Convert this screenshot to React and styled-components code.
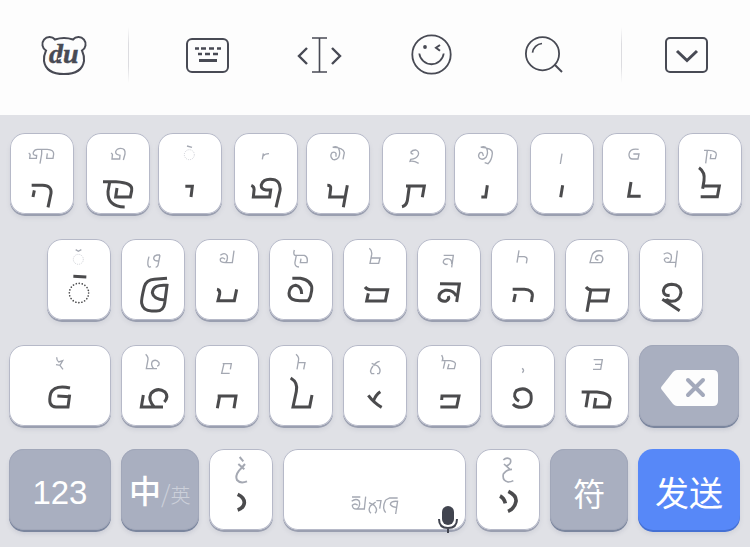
import React from "react";
import styled, { createGlobalStyle, css } from "styled-components";

const GlobalStyle = createGlobalStyle`
  * { box-sizing: border-box; }
  body {
    margin: 0;
    background: #e0e1e6;
    font-family: "Liberation Sans", "Noto Sans CJK SC", sans-serif;
  }
`;

const Keyboard = styled.main`
  min-height: 100vh;
  background: #e0e1e6;
`;

const Toolbar = styled.header`
  display: grid;
  grid-template-columns: 128fr 1px 492fr 1px 128fr;
  align-items: center;
  justify-items: center;
  height: 115px;
  padding-bottom: 5px;
  background: #fdfdfd;
`;

const ToolGroup = styled.div`
  display: flex;
  justify-content: space-around;
  justify-self: stretch;
  padding: 0 22px;
`;

const Divider = styled.span`
  width: 1px;
  height: 56px;
  background: linear-gradient(#fdfdfd, #dcdce0 30%, #dcdce0 70%, #fdfdfd);
`;

const ToolButton = styled.button`
  display: flex;
  padding: 0;
  border: 0;
  background: none;
  color: #484a54;
`;

const ToolIcon = styled.svg`
  display: block;
  width: 48px;
  height: 48px;
  fill: none;
  stroke: currentColor;
  stroke-width: 2;
`;

const LogoText = styled.text`
  font: italic bold 28px "Liberation Serif", serif;
  fill: currentColor;
  stroke: currentColor;
  stroke-width: 0.5;
`;

const Rows = styled.div`
  display: flex;
  flex-direction: column;
  gap: 25px;
  padding: 18px 0 16px;
`;

const LowerRows = styled.div`
  display: flex;
  flex-direction: column;
  gap: 23px;
`;

const Row = styled.div`
  display: flex;
  gap: ${(p) => p.$gap || 10}px;
  padding: 0 ${(p) => p.$right}px 0 ${(p) => p.$left}px;
`;

const Pair = styled.div`
  display: flex;
  flex: 2 1 8px;
  min-width: 0;
  gap: 8px;
`;

const tones = {
  light: css`
    background: #ffffff;
    box-shadow: inset 0 0 0 1px #b6b9c8, 0 2px 0 #9a9fb0,
      0 4px 4px rgba(120, 125, 150, 0.15);
  `,
  gray: css`
    background: #a9afc0;
    box-shadow: inset 0 0 0 1px #a1a7b9, 0 2px 0 #7b869e,
      0 4px 4px rgba(120, 125, 150, 0.2);
  `,
  blue: css`
    background: #5788f8;
    box-shadow: 0 2px 0 #4470d4, 0 4px 4px rgba(120, 125, 150, 0.15);
  `,
};

const Key = styled.button`
  position: relative;
  display: flex;
  align-items: center;
  justify-content: center;
  flex: ${(p) => p.$grow || 1} 1 0;
  min-width: 0;
  height: 81px;
  padding: 0;
  border: 0;
  border-radius: 15px;
  color: #ffffff;
  ${(p) => tones[p.$tone || "light"]}
`;

const Glyphs = styled.svg`
  display: block;
  flex: none;
  width: 64px;
  height: 80px;
  fill: none;
`;

const Minor = styled.path`
  stroke: #a4a8b2;
  stroke-width: ${(p) => p.$weight || 4};
`;

const Major = styled.path`
  stroke: #4b4b4d;
  stroke-width: ${(p) => p.$weight || 9};
`;

const MinorRing = styled.circle`
  stroke: #b9bcc4;
  stroke-width: 2;
  stroke-dasharray: 3 3;
`;

const MajorRing = styled.circle`
  stroke: #4b4b4d;
  stroke-width: 5;
  stroke-linecap: round;
  stroke-dasharray: 0.1 9;
`;

const Label = styled.span`
  padding-top: 6px;
  font-size: ${(p) => p.$size}px;
  line-height: 40px;
  white-space: nowrap;
`;

const HanLabel = styled(Label)`
  padding-top: 4px;
  font-family: "Noto Sans CJK SC", sans-serif;
`;

const Chosen = styled.span`
  font-weight: 500;
`;

const Alternate = styled.span`
  font-size: 20px;
  font-weight: 300;
  color: #ccd0da;
`;

const Slash = styled(Alternate)`
  font-size: 24px;
`;

const EraseIcon = styled.svg`
  width: 58px;
  height: 36px;
  margin-top: 4px;
`;

const Mic = styled.svg`
  position: absolute;
  right: 8px;
  bottom: -3px;
  width: 20px;
  height: 28px;
  fill: none;
  stroke: #41444f;
  stroke-width: 2;
`;

const rowOne = [
  {
    name: "1",
    minor: "M56 57 Q62 60 60 66 L59 73 H79 L80 64 H76 Q68 63 70 55 Q74 45 84 46 H112 Q132 47 131 60 L129 73 H110 L112 58 M95 46 V60 L90 89",
    major: "M65 154 H98 Q126 155 123 178 L114 220 M73 169 L69 189",
  },
  {
    name: "2",
    minor: "M75 57 Q81 60 79 65 L78 75 H101 L102 64 Q88 62 89 53 Q92 43 104 43 Q119 43 117 60 L112 78",
    major: "M51 143 H90 Q142 146 137 170 L133 189 H89 L93 162 M71 145 L66 172 Q64 218 116 219",
  },
  {
    name: "3",
    ring: [94, 62],
    minor: "M87 36 L102 40",
    major: "M82 157 H103 L99 189",
  },
  {
    name: "4",
    minor: "M88 58 L85 76 M87 66 Q92 59 105 59",
    major: "M52 154 Q62 158 60 170 L58 189 H107 L110 168 H96 Q80 166 82 152 Q88 136 108 136 Q142 136 138 170 L126 220",
  },
  {
    name: "5",
    minor: "M80 40 Q92 34 98 44 Q104 56 98 70 Q90 80 80 76 Q70 66 78 56 Q86 52 90 58 V68 M80 40 Q112 40 115 56 L111 76",
    major: "M64 154 Q76 154 74 164 L71 189 H114 M124 154 L112 220",
  },
  {
    name: "6",
    minor: "M94 60 Q86 60 87 54 Q92 47 102 48 Q112 52 109 62 Q104 74 86 76 L84 82 Q96 80 110 88",
    major: "M72 156 H127 L121 190 M82 156 L76 200 Q73 215 60 218",
  },
  {
    name: "7",
    minor: "M80 40 Q92 34 98 44 Q104 56 96 70 Q86 80 77 73 Q70 64 78 56 Q86 52 88 66 M82 40 Q116 42 115 58 Q113 80 102 89 L92 86",
    major: "M100 154 L95 189 H82",
  },
  { name: "8", minor: "M96 59 L91 90", major: "M98 154 L92 190" },
  {
    name: "9",
    minor: "M110 46 Q84 42 81 60 Q80 75 92 75 H108 L111 60 H94",
    major: "M87 144 L80 187 H116",
  },
  {
    name: "10",
    minor: "M78 49 H92 Q116 50 115 62 L112 74 H97 L99 60 M88 49 L83 88",
    major: "M63 101 Q82 114 78 140 L74 164 M74 156 H124 L118 188 H68",
  },
];

const rowTwo = [
  {
    name: "11",
    ring: [94, 58],
    bigRing: true,
    minor: "M86 29 L94 34 L103 29",
    major: "M79 109 L118 111",
  },
  {
    name: "12",
    minor: "M84 50 Q78 70 82 78 Q84 83 90 80 M117 45 H108 Q98 47 98 56 Q100 64 114 63 M117 45 L111 76 Q108 82 104 81",
    major: "M138 115 L100 118 Q76 120 70 140 Q60 180 62 190 Q66 213 92 213 H106 Q128 213 131 190 L138 136 Q96 132 94 158 Q97 178 132 180",
  },
  {
    name: "13",
    minor: "M76 46 Q88 36 96 46 Q100 58 92 68 H112 L117 32 M92 68 Q74 68 76 57 Q82 50 90 58",
    major: "M66 148 Q76 150 74 162 L69 182 H118 L125 148",
  },
  {
    name: "14",
    minor: "M76 30 Q72 44 78 46 H106 Q118 50 114 68 H94 L96 56 M82 46 L78 66 Q76 80 90 81",
    major: "M70 115 H94 Q132 122 128 152 Q126 170 118 182 H98 Q60 184 60 160 Q62 138 80 136 Q98 140 98 162",
  },
  {
    name: "15",
    minor: "M79 25 Q88 32 86 44 L81 70 H107 L111 54 H85",
    major: "M66 141 Q72 149 82 149 H134 L127 183 H71 L76 160",
  },
  {
    name: "16",
    minor: "M80 46 H109 L104 82 M104 72 Q106 56 90 56 Q78 58 79 68 Q84 76 92 72",
    major: "M69 131 L127 132 L119 186 M118 168 Q108 148 84 151 Q64 158 66 174 Q72 186 88 183 Q98 178 94 168",
  },
  {
    name: "17",
    minor: "M84 31 L78 68 M80 50 H100 Q109 52 108 58 L106 70",
    major: "M65 148 H100 Q126 150 124 168 L121 186 M73 162 L68 186",
  },
  {
    name: "18",
    minor: "M112 33 Q84 29 80 50 L75 68 H108 Q118 58 110 48 Q98 42 92 52 Q90 60 100 60",
    major: "M63 141 Q70 150 80 150 H130 L124 183 H73 M77 152 L66 215",
  },
  {
    name: "19",
    minor: "M74 43 Q86 34 96 44 Q100 58 92 66 Q76 70 76 58 Q82 50 90 56 M84 67 H111 M115 32 L109 82",
    major: "M92 166 Q74 168 73 152 Q76 134 98 133 Q126 134 126 158 Q122 184 98 184 Q84 182 82 176 M70 178 L122 212",
  },
];

const rowThreeFirst = {
  name: "20",
  minor: "M86 34 Q86 44 92 48 L104 44 L96 58 L84 56 M94 56 L105 70",
  major: "M126 126 Q80 116 68 142 Q58 182 84 183 H120 L125 146 M88 150 L125 152",
};

const rowThree = [
  {
    name: "21",
    minor: "M74 25 Q84 34 80 46 L76 68 H108 M98 68 Q88 56 94 46 Q106 38 114 50 Q116 60 108 60",
    major: "M67 147 L61 183 H126 M100 183 Q80 162 90 142 Q110 122 132 138 Q144 152 130 168",
  },
  {
    name: "22",
    minor: "M83 53 H109 L106 70 M87 53 L80 82 H104",
    major: "M68 150 H123 L117 187 M74 150 L67 187",
  },
  {
    name: "23",
    minor: "M81 25 Q92 34 88 46 L84 70 M86 50 H108 L104 70",
    major: "M65 96 Q88 110 82 136 L72 183 H122 L129 147",
  },
  {
    name: "24",
    minor: "M90 60 Q78 76 86 83 H94 M110 46 Q98 48 92 60 M86 52 L104 60 Q116 72 108 83 H102",
    major: "M76 148 Q92 170 116 184 M112 137 Q98 146 92 164",
  },
  {
    name: "25",
    minor: "M74 27 Q80 38 76 44 H100 Q118 48 115 56 L112 68 H92 L96 54 M84 46 L79 68",
    major: "M74 162 L75 150 H126 L119 183 H70",
  },
  {
    name: "26",
    minor: "M93 67 Q102 72 94 80",
    major: "M84 166 Q62 152 76 134 Q102 120 119 142 Q128 182 92 184 Q74 184 66 174",
  },
  {
    name: "27",
    minor: "M86 41 H112 L107 70 H84 M90 55 H110",
    major: "M50 138 H96 Q138 142 135 162 L131 183 H88 L92 156 M70 140 L63 184",
  },
];

const toneMark = {
  name: "28",
  minorWeight: 6,
  majorWeight: 11,
  minor: "M92 21 L103 34 M88 42 L106 58 M108 42 Q98 54 90 62 Q78 78 84 90 Q94 102 114 94",
  major: "M86 133 Q106 142 106 158 Q104 174 86 180",
};

const doubleToneMark = {
  name: "29",
  minorWeight: 5,
  majorWeight: 11,
  minor: "M82 30 Q92 20 103 28 Q108 42 90 48 M84 42 L104 60 M108 58 Q92 58 82 72 Q78 92 96 96 Q106 96 112 92",
  major: "M97 124 Q122 136 120 154 Q116 176 96 184 M72 138 Q84 144 88 160",
};

const spaceGlyphs = {
  name: "space",
  minor:
    "M27 141 H52 M26 154 Q38 144 48 152 Q54 168 42 177 Q28 178 28 166 Q36 158 44 166 M42 177 H64 L68 140 M84 190 Q74 182 82 168 L98 156 M78 158 L94 166 Q106 180 96 190 M100 152 H114 L110 176 M128 150 Q116 174 128 188 M164 144 H140 L128 150 M164 154 Q142 152 142 164 Q148 172 160 172 M164 152 L158 192",
};

function Drawing({ glyph }) {
  return (
    <Glyphs viewBox="0 0 192 240" aria-hidden="true">
      {glyph.ring && <MinorRing cx={glyph.ring[0]} cy={glyph.ring[1]} r="15" />}
      {glyph.bigRing && <MajorRing cx="96" cy="159" r="29" />}
      <Minor d={glyph.minor} $weight={glyph.minorWeight} />
      {glyph.major && <Major d={glyph.major} $weight={glyph.majorWeight} />}
    </Glyphs>
  );
}

function LetterKey({ glyph, grow }) {
  return (
    <Key type="button" $grow={grow} aria-label={`Letter ${glyph.name}`}>
      <Drawing glyph={glyph} />
    </Key>
  );
}

function Tool({ label, children }) {
  return (
    <ToolButton type="button" aria-label={label}>
      <ToolIcon viewBox="0 0 48 48">{children}</ToolIcon>
    </ToolButton>
  );
}

export default function App() {
  return (
    <Keyboard>
      <GlobalStyle />
      <Toolbar>
        <Tool label="Menu">
          <path d="M15 8.5 Q24 5.5 33 8.5 A7.2 7.2 0 1 1 42 19.5 Q44.5 25 44 30 Q42 43 24 43 Q6 43 4 30 Q3.5 25 6 19.5 A7.2 7.2 0 1 1 15 8.5Z" />
          <LogoText x="9" y="32">du</LogoText>
          <path d="M18 28 L24 26" stroke="#fdfdfd" strokeWidth="1.5" />
        </Tool>
        <Divider />
        <ToolGroup>
          <Tool label="Keyboard layout">
            <rect x="4" y="8" width="41" height="33" rx="5" />
            <path
              d="M12 17.500h4 M18 17.500h5 M26 17.500h5 M34 17.500h4 M15 23h4 M22 23h5 M30 23h5"
              strokeWidth="2.600"
            />
            <path d="M16 29.500h18" strokeWidth="3" />
          </Tool>
          <Tool label="Move cursor">
            <path d="M24.500 7 V41 M17 7 H32 M17 41 H32" strokeWidth="1.600" />
            <path d="M12 17 L4 25 L12 33 M37 17 L45 25 L37 33" strokeWidth="2.400" />
          </Tool>
          <Tool label="Emoji">
            <circle cx="24.500" cy="23.500" r="19.200" strokeWidth="1.800" />
            <circle cx="18" cy="16" r="1.900" fill="currentColor" stroke="none" />
            <path d="M33 14 L29 16.700 L33 19.700" />
            <path d="M12.300 22.500 A12.300 12.300 0 0 0 36.700 22.500" strokeWidth="1.800" />
          </Tool>
          <Tool label="Search">
            <circle cx="23.500" cy="22.700" r="16.600" strokeWidth="1.800" />
            <path d="M36 34 L43 41" />
            <path d="M13.500 21.700 A10.500 10.500 0 0 1 23 12.500" strokeWidth="1.700" />
          </Tool>
        </ToolGroup>
        <Divider />
        <Tool label="Hide keyboard">
          <rect x="4" y="7" width="41" height="34" rx="4" />
          <path d="M15 20 L25 29.500 L35 20" strokeWidth="3" />
        </Tool>
      </Toolbar>

      <Rows>
        <Row $left={10} $right={8} $gap={12}>
          <LetterKey glyph={rowOne[0]} />
          {[1, 3, 5, 7].map((i) => (
            <Pair key={i}>
              <LetterKey glyph={rowOne[i]} />
              <LetterKey glyph={rowOne[i + 1]} />
            </Pair>
          ))}
          <LetterKey glyph={rowOne[9]} />
        </Row>
        <Row $left={47} $right={47}>
          {rowTwo.map((g) => (
            <LetterKey key={g.name} glyph={g} />
          ))}
        </Row>
        <LowerRows>
          <Row $left={9} $right={11}>
            <LetterKey glyph={rowThreeFirst} grow={102} />
            {rowThree.map((g) => (
              <LetterKey key={g.name} glyph={g} grow={64} />
            ))}
            <Key type="button" $tone="gray" $grow={100} aria-label="Delete">
              <EraseIcon viewBox="0 0 58 36">
                <path
                  d="M17 0 H53 Q58 0 58 5 V31 Q58 36 53 36 H17 Q15 36 13 34 L2 20 Q0 18 2 16 L13 2 Q15 0 17 0Z"
                  fill="#fdfdfd"
                />
                <path
                  d="M28 10 L43 25 M43 10 L28 25"
                  stroke="#a3a9bb"
                  strokeWidth="4"
                  strokeLinecap="round"
                />
              </EraseIcon>
            </Key>
          </Row>
          <Row $left={9} $right={10}>
            <Key type="button" $tone="gray" $grow={102}>
              <Label $size={33}>123</Label>
            </Key>
            <Key type="button" $tone="gray" $grow={78}>
              <HanLabel $size={32}>
                <Chosen>中</Chosen><Slash>/</Slash><Alternate>英</Alternate>
              </HanLabel>
            </Key>
            <LetterKey glyph={toneMark} grow={64} />
            <Key type="button" $grow={184} aria-label="Space">
              <Drawing glyph={spaceGlyphs} />
              <Mic viewBox="0 0 20 28" aria-hidden="true">
                <rect x="4" y="1" width="12" height="19" rx="6" fill="#41444f" stroke="none" />
                <path d="M1 14 Q1 23 10 23 Q19 23 19 14 M10 23 V28" />
              </Mic>
            </Key>
            <LetterKey glyph={doubleToneMark} grow={64} />
            <Key type="button" $tone="gray" $grow={78}>
              <HanLabel $size={32}>符</HanLabel>
            </Key>
            <Key type="button" $tone="blue" $grow={102}>
              <HanLabel $size={34}>发送</HanLabel>
            </Key>
          </Row>
        </LowerRows>
      </Rows>
    </Keyboard>
  );
}
